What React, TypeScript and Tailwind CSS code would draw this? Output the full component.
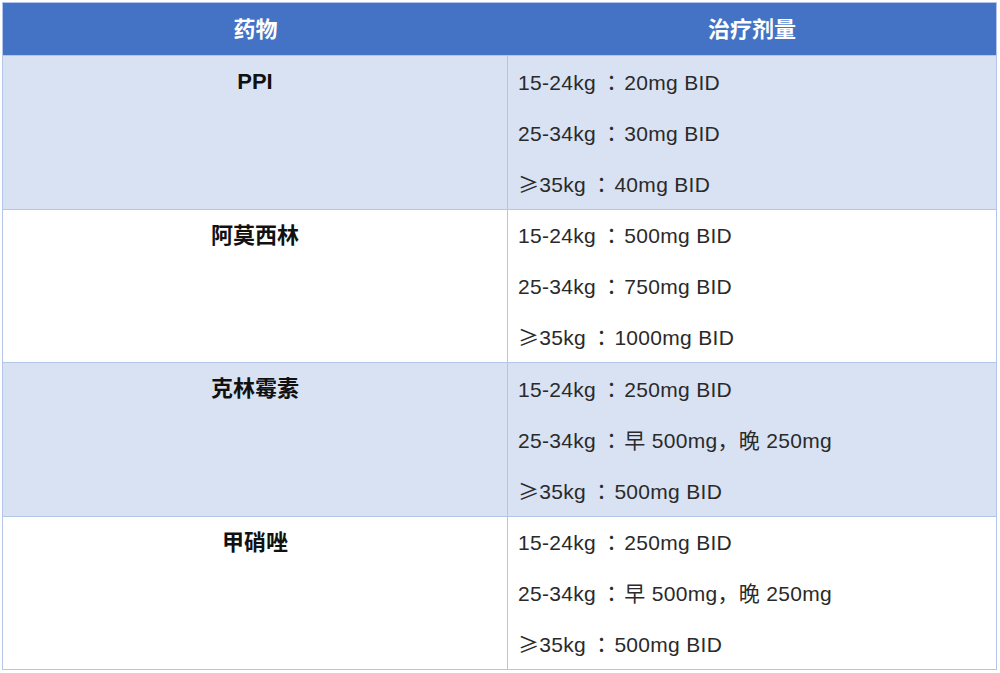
const rows = [
  { drug: 'PPI', doses: ['15-24kg：20mg BID', '25-34kg：30mg BID', '≥35kg：40mg BID'] },
  { drug: '阿莫西林', doses: ['15-24kg：500mg BID', '25-34kg：750mg BID', '≥35kg：1000mg BID'] },
  { drug: '克林霉素', doses: ['15-24kg：250mg BID', '25-34kg：早 500mg，晚 250mg', '≥35kg：500mg BID'] },
  { drug: '甲硝唑', doses: ['15-24kg：250mg BID', '25-34kg：早 500mg，晚 250mg', '≥35kg：500mg BID'] },
];

// colon and ≥ come from CJK faces so they are full width like the source
function Dose({ text }: { text: string }) {
  const parts = text.split(/(：|≥)/);
  return (
    <div className="h-[51px] flex items-center whitespace-pre tracking-[0.3px]">
      <span>
        {parts.map((p, k) =>
          p === '：' ? (
            <span key={k} className="leading-none pl-[5px] pr-[2px]" style={{ fontFamily: '"Noto Sans CJK TC", sans-serif' }}>
              ：
            </span>
          ) : p === '≥' ? (
            <span key={k} className="leading-none" style={{ fontFamily: '"Noto Sans CJK SC", sans-serif' }}>
              ≥
            </span>
          ) : (
            <span key={k}>{p}</span>
          ),
        )}
      </span>
    </div>
  );
}

export default function App() {
  return (
    <div
      className="w-[1000px] h-[673px] bg-white pt-[2px] pl-[2px]"
      style={{ fontFamily: '"Liberation Sans", "Noto Sans CJK SC", sans-serif' }}
    >
      <div className="w-[995px] border border-[#b4c6e7]">
        <div className="grid grid-cols-[505px_1fr] h-[52px] bg-[#4472c4] text-white font-bold text-[22px]">
          <div className="flex items-center justify-center">药物</div>
          <div className="flex items-center justify-center">治疗剂量</div>
        </div>
        {rows.map((row, i) => (
          <div
            key={i}
            className={`grid grid-cols-[505px_1fr] h-[153.5px] overflow-hidden border-t border-[#b4c6e7] ${i % 2 === 0 ? 'bg-[#d9e2f3]' : 'bg-white'}`}
          >
            <div className="border-r border-[#b4c6e7] text-center font-bold text-[22px] text-[#111]">
              <div className="h-[51px] flex items-center justify-center">{row.drug}</div>
            </div>
            <div className="pl-[10px] text-[21px] leading-none text-[#2a2a2a]">
              {row.doses.map((d, j) => (
                <Dose key={j} text={d} />
              ))}
            </div>
          </div>
        ))}
      </div>
    </div>
  );
}
